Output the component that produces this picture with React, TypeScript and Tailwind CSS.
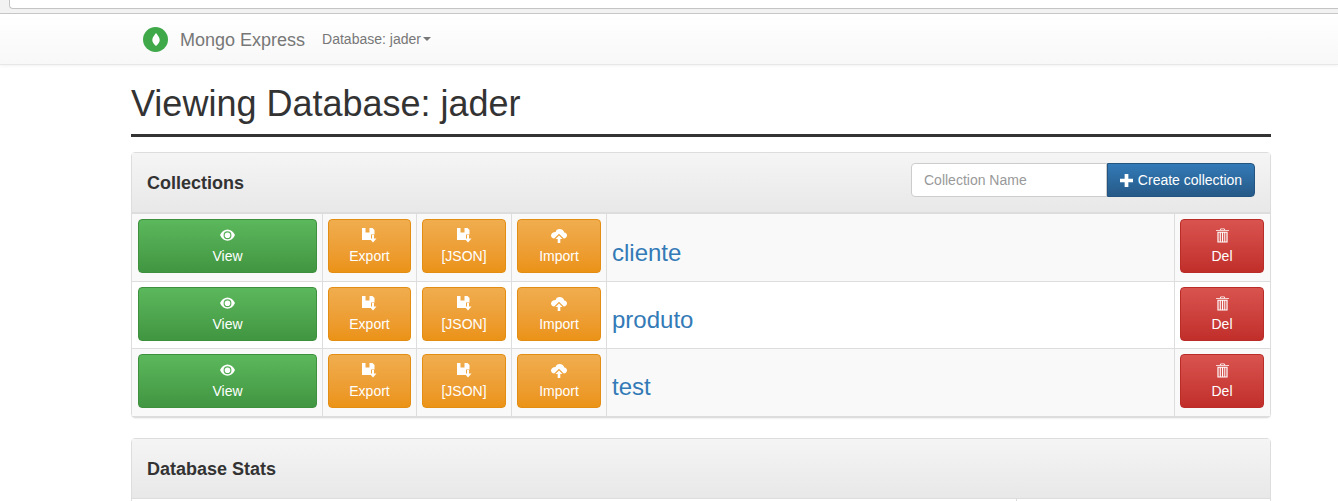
const rows = [
  { name: 'cliente', height: 'h-[68px]', nameBottom: 'pb-[11px]' },
  { name: 'produto', height: 'h-[67px]', nameBottom: 'pb-[11px]' },
  { name: 'test', height: 'h-[68px]', nameBottom: 'pb-[12px]' },
];

function EyeIcon() {
  return (
    <svg viewBox="0 0 16 12" className="h-[12px] w-[15px] fill-current">
      <path
        fillRule="evenodd"
        d="M8 0C4.600 0 1.700 2.200 0 6c1.700 3.800 4.600 6 8 6s6.300-2.200 8-6c-1.700-3.800-4.600-6-8-6zM8 2A4.200 4.200 0 1 1 8 10.400 4.200 4.200 0 0 1 8 2zM8 3.200a3 3 0 1 0 0 6 3 3 0 0 0 0-6z"
      />
    </svg>
  );
}

function SaveIcon() {
  return (
    <svg viewBox="0 0 15 16" className="h-[16px] w-[15px] fill-current">
      <path d="M0 1h3.500v4.500h4V1h3l2 2v4.500H9V13H0z" />
      <path d="M10 8h2v3.500h2.500L11 15.500l-3.500-4H10z" />
    </svg>
  );
}

function CloudIcon() {
  return (
    <svg viewBox="0 0 16 15" className="h-[15px] w-[16px] fill-current">
      <path d="M8.500 1C6.500 1 5 2.300 4.600 4 2 4 0 5.600 0 7.600 0 9.200 1.300 10.400 3.200 10.500L8 5.800l4.800 4.700c1.800-.2 3.200-1.400 3.200-3 0-1.500-1.100-2.700-2.700-2.900C13 2.600 11 1 8.500 1z" />
      <path d="M8 7.500l3.500 3.500H9.300v4H6.700v-4H4.500z" />
    </svg>
  );
}

function TrashIcon() {
  return (
    <svg viewBox="0 0 14 15" className="h-[15px] w-[13px] fill-current">
      <path
        fillRule="evenodd"
        d="M5 0h4l1 1.500h4v1H0v-1h4zM5.500 .8l-.3.700h3.600L8.500 .8zM1.500 3.500h11V15h-11zM2.800 4.500V14h1.200V4.500zM5.200 4.500V14h1.200V4.500zM7.700 4.500V14h1.200V4.500zM10 4.500V14h1.200V4.500z"
      />
    </svg>
  );
}

function ActionButton({
  label,
  icon,
  tone,
  width,
}: {
  label: string;
  icon: React.ReactNode;
  tone: 'green' | 'orange' | 'red';
  width: string;
}) {
  const tones = {
    green: 'border-[#3e8f3e] bg-gradient-to-b from-[#5cb85c] to-[#419641]',
    orange: 'border-[#e38d13] bg-gradient-to-b from-[#f0ad4e] to-[#eb9316]',
    red: 'border-[#b92c28] bg-gradient-to-b from-[#d9534f] to-[#c12e2a]',
  };
  return (
    <a
      className={`flex h-[54px] flex-col items-center rounded border pt-[7px] text-[14px] leading-5 text-white ${width} ${tones[tone]}`}
    >
      <span className="flex h-[16px] items-center justify-center">{icon}</span>
      <span className="mt-[3px]">{label}</span>
    </a>
  );
}

export default function App() {
  return (
    <div className="h-[501px] overflow-hidden bg-white font-['Liberation_Sans',Arial,sans-serif] text-[14px] text-[#333]">
      <div className="h-[14px] border-b border-[#c8c8c8] bg-[#f2f2f2]">
        <div className="ml-[9px] h-[9px] rounded-bl-[4px] border-b border-l border-[#c4c4c4] bg-white" />
      </div>

      <nav className="h-[51px] border-b border-[#e7e7e7] bg-gradient-to-b from-white to-[#f8f8f8] shadow-[0_1px_3px_rgba(0,0,0,0.06)]">
        <div className="flex h-[50px] items-center pl-[143px] text-[#777]">
          <span className="flex h-[25px] w-[25px] items-center justify-center rounded-full bg-[#3fa94a]">
            <svg viewBox="0 0 8 14" className="h-[13px] w-[8px] fill-white">
              <path d="M4 0C5.500 2 8 4.500 8 7.500 8 10 6 12.500 4 14 2 12.500 0 10 0 7.500 0 4.500 2.500 2 4 0z" />
            </svg>
          </span>
          <span className="ml-[12px] mt-[2px] text-[18px]">Mongo Express</span>
          <span className="ml-[17px] flex items-center">
            Database: jader
            <span className="ml-[2px] border-x-4 border-t-4 border-x-transparent border-t-[#777]" />
          </span>
        </div>
      </nav>

      <main className="ml-[131px] w-[1140px]">
        <h1 className="mt-[18px] border-b-[3px] border-[#333] pb-[10px] text-[36px] leading-[41px]">
          Viewing Database: jader
        </h1>

        <section className="mt-[15px] rounded border border-[#ddd] shadow-[0_1px_1px_rgba(0,0,0,0.05)]">
          <div className="flex h-[61px] justify-between border-b-2 border-[#ddd] bg-gradient-to-b from-[#f5f5f5] to-[#e8e8e8] px-[15px]">
            <h3 className="mt-[20px] text-[18px] font-bold leading-5">Collections</h3>
            <div className="mt-[10px] flex h-[34px]">
              <input
                placeholder="Collection Name"
                className="w-[196px] rounded-l border border-[#ccc] bg-white px-3 text-[14px] outline-none placeholder:text-[#999]"
              />
              <button
                type="button"
                className="flex w-[148px] items-center justify-center gap-[5px] rounded-r border border-[#245580] bg-gradient-to-b from-[#337ab7] to-[#265a88] text-white"
              >
                <svg viewBox="0 0 14 14" className="h-[13px] w-[13px] fill-current">
                  <path d="M5 0h4v5h5v4H9v5H5V9H0V5h5z" />
                </svg>
                Create collection
              </button>
            </div>
          </div>

          <div>
            {rows.map((row, index) => (
              <div
                key={row.name}
                className={`flex border-b border-[#ddd] ${row.height} ${index % 2 === 0 ? 'bg-[#f9f9f9]' : 'bg-white'}`}
              >
                <div className="w-[191px] border-r border-[#ddd] pl-[6px] pt-[5px]">
                  <ActionButton label="View" icon={<EyeIcon />} tone="green" width="w-[179px]" />
                </div>
                <div className="w-[94px] border-r border-[#ddd] pl-[5px] pt-[5px]">
                  <ActionButton label="Export" icon={<SaveIcon />} tone="orange" width="w-[83px]" />
                </div>
                <div className="w-[95px] border-r border-[#ddd] pl-[5px] pt-[5px]">
                  <ActionButton label="[JSON]" icon={<SaveIcon />} tone="orange" width="w-[84px]" />
                </div>
                <div className="w-[95px] border-r border-[#ddd] pl-[5px] pt-[5px]">
                  <ActionButton label="Import" icon={<CloudIcon />} tone="orange" width="w-[84px]" />
                </div>
                <div
                  className={`flex flex-1 items-end border-r border-[#ddd] pl-[5px] text-[24px] leading-[34px] text-[#337ab7] ${row.nameBottom}`}
                >
                  {row.name}
                </div>
                <div className="w-[95px] pl-[5px] pt-[5px]">
                  <ActionButton label="Del" icon={<TrashIcon />} tone="red" width="w-[84px]" />
                </div>
              </div>
            ))}
          </div>
        </section>

        <section className="mt-[20px] rounded border border-[#ddd]">
          <div className="h-[60px] border-b border-[#ddd] bg-gradient-to-b from-[#f5f5f5] to-[#e8e8e8] pl-[15px] pt-[20px]">
            <h3 className="text-[18px] font-bold leading-5">Database Stats</h3>
          </div>
          <div className="flex h-[20px]">
            <div className="w-[885px] border-r border-[#ddd]" />
          </div>
        </section>
      </main>
    </div>
  );
}
